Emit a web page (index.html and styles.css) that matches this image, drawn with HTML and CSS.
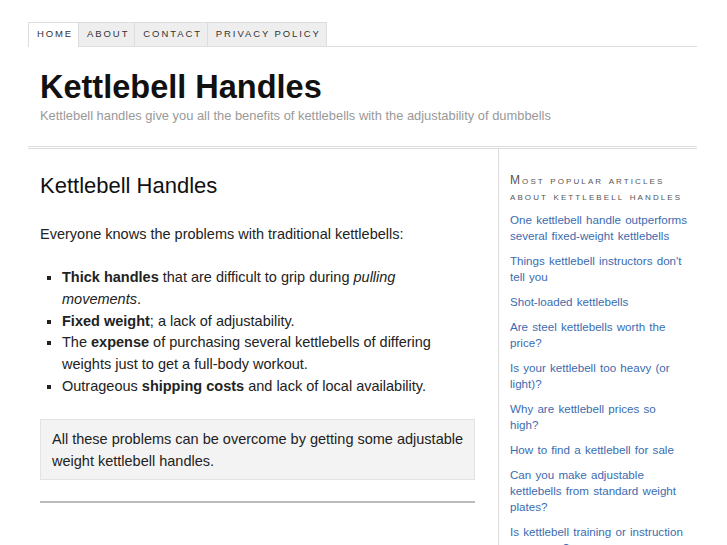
FILE: index.html
```html
<!DOCTYPE html>
<html lang="en">
<head>
    <meta charset="UTF-8">
    <meta name="viewport" content="width=device-width, initial-scale=1.0">
    <title>Kettlebell Handles</title>
    <link rel="stylesheet" href="styles.css">
</head>
<body>
    <div id="wrapper">
        <div id="header">
            <ul id="navigation">
                <li class="current"><a href="#">Home</a></li>
                <li><a href="#">About</a></li>
                <li><a href="#">Contact</a></li>
                <li><a href="#">Privacy Policy</a></li>
            </ul>
            <div id="title">
                <h1>Kettlebell Handles</h1>
                <p class="tagline">Kettlebell handles give you all the benefits of kettlebells with the adjustability of dumbbells</p>
            </div>
        </div>

        <div id="content">
            <div id="primary">
                <h2>Kettlebell Handles</h2>
                <p>Everyone knows the problems with traditional kettlebells:</p>
                <ul class="problems">
                    <li><strong>Thick handles</strong> that are difficult to grip during <em>pulling movements</em>.</li>
                    <li><strong>Fixed weight</strong>; a lack of adjustability.</li>
                    <li>The <strong>expense</strong> of purchasing several kettlebells of differing weights just to get a full-body workout.</li>
                    <li>Outrageous <strong>shipping costs</strong> and lack of local availability.</li>
                </ul>
                <div class="callout">
                    All these problems can be overcome by getting some adjustable weight kettlebell handles.
                </div>
                <hr>
            </div>

            <div id="sidebar">
                <h3>Most popular articles about kettlebell handles</h3>
                <ul class="popular">
                    <li><a href="#">One kettlebell handle outperforms several fixed-weight kettlebells</a></li>
                    <li><a href="#">Things kettlebell instructors don't tell you</a></li>
                    <li><a href="#">Shot-loaded kettlebells</a></li>
                    <li><a href="#">Are steel kettlebells worth the price?</a></li>
                    <li><a href="#">Is your kettlebell too heavy (or light)?</a></li>
                    <li><a href="#">Why are kettlebell prices so high?</a></li>
                    <li><a href="#">How to find a kettlebell for sale</a></li>
                    <li><a href="#">Can you make adjustable kettlebells from standard weight plates?</a></li>
                    <li><a href="#">Is kettlebell training or instruction necessary?</a></li>
                </ul>
            </div>
        </div>
    </div>
</body>
</html>
```

FILE: styles.css
```css
body {
    font-family: "Liberation Sans", Arial, sans-serif;
    color: #222;
    background: #fff;
    margin: 0;
    padding: 0;
}
#wrapper {
    width: 669px;
    margin: 0 0 0 28px;
    padding-top: 22px;
}

/* header */
#navigation {
    list-style: none;
    margin: 0;
    padding: 0;
    display: flex;
    border-bottom: 1px solid #ddd;
    height: 24px;
}
#navigation li {
    background: #eee;
    border: 1px solid #ddd;
    border-left: none;
    height: 23px;
}
#navigation li:first-child {
    border-left: 1px solid #ddd;
}
#navigation li.current {
    background: #fff;
    height: 24px;
    border-bottom: none;
}
#navigation a {
    display: block;
    padding: 0 5px 0 8px;
    line-height: 22px;
    font-size: 9.5px;
    letter-spacing: 1.9px;
    text-transform: uppercase;
    color: #333;
    text-decoration: none;
}
#title {
    padding: 22px 12px 23px;
    border-bottom: 3px double #ddd;
}
#title h1 {
    margin: 0;
    font-size: 32.5px;
    line-height: 36px;
    color: #111;
}
.tagline {
    margin: 3px 0 0;
    font-size: 12.9px;
    color: #999;
}

/* content */
#content {
    display: flex;
}
#primary {
    width: 435px;
    padding: 22px 23px 40px 12px;
    border-right: 1px solid #ddd;
    min-height: 380px;
}
#primary h2 {
    font-weight: normal;
    font-size: 22px;
    line-height: 30px;
    margin: 0 0 22px;
    color: #111;
}
#primary p {
    font-size: 14.5px;
    line-height: 22px;
    margin: 0 0 22px;
}
.problems {
    list-style: square;
    margin: 0 0 21px;
    padding-left: 22px;
    font-size: 14.5px;
    line-height: 21.8px;
}
.callout {
    background: #f3f3f3;
    border: 1px solid #e3e3e3;
    padding: 8px 6px 7px 11px;
    font-size: 14.5px;
    line-height: 22px;
}
#primary hr {
    border: none;
    border-top: 2px solid #bbb;
    margin: 21px 0 0;
}

/* sidebar */
#sidebar {
    padding: 23px 0 0 11px;
    width: 187px;
}
#sidebar h3 {
    font-variant: small-caps;
    font-weight: normal;
    font-size: 12px;
    letter-spacing: 2.1px;
    line-height: 16px;
    color: #555;
    margin: 0 0 8px;
}
.popular {
    list-style: none;
    margin: 0;
    padding: 0;
}
.popular li {
    width: 177px;
    font-size: 11.6px;
    word-spacing: 1px;
    line-height: 16px;
    margin-bottom: 9px;
}
.popular a {
    color: #3b6cb0;
    text-decoration: none;
}
```
